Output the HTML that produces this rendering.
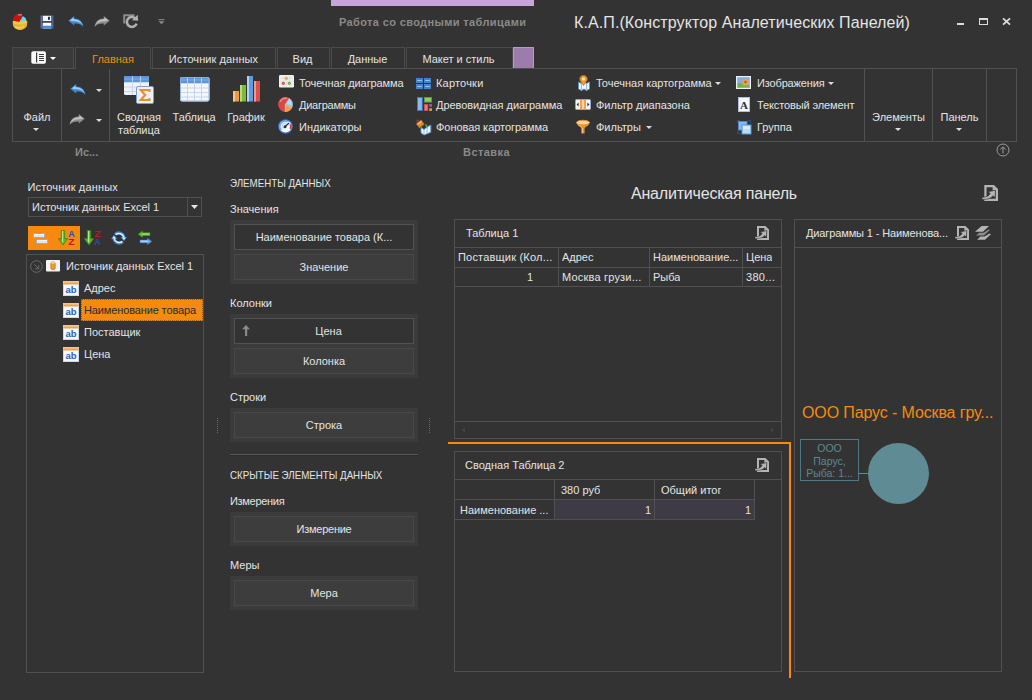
<!DOCTYPE html>
<html lang="ru">
<head>
<meta charset="utf-8">
<title>К.А.П.(Конструктор Аналетических Панелей)</title>
<style>
*{box-sizing:border-box;margin:0;padding:0}
html,body{width:1032px;height:700px;overflow:hidden;background:#333333}
body{position:relative;font-family:"Liberation Sans","DejaVu Sans",sans-serif;font-size:11px;color:#e4e4e4;line-height:13px}
.a{position:absolute}
.t{position:absolute;white-space:nowrap;line-height:13px}
.c{text-align:center}
.b{font-weight:bold;color:#8a8a8a}
.bd{border:1px solid #505050}
.tab{position:absolute;top:47px;height:22px;border:1px solid #4a4a4a;border-bottom:none;text-align:center;font-size:11px;line-height:22px;white-space:nowrap}
.vl{position:absolute;width:1px;background:#505050}
.hl{position:absolute;height:1px;background:#505050}
.grp{position:absolute;background:#3b3b3b}
.btn{position:absolute;border:1px solid #525252;background:#333333;text-align:center;line-height:24px;white-space:nowrap}
.ph{background:#3d3d3d;border-color:#484848}
.arr{position:absolute;width:0;height:0;border-left:3px solid transparent;border-right:3px solid transparent;border-top:3px solid #dcdcdc}
svg{position:absolute;overflow:visible}
.cell{position:absolute;white-space:nowrap;line-height:19px;height:20px;overflow:hidden}
</style>
</head>
<body>

<!-- ===== TITLE BAR ===== -->
<div class="a" id="ctxbar" style="left:331px;top:0;width:203px;height:6px;background:#c7a4da"></div>
<div class="t b" id="ctxtitle" style="left:339px;top:16px;font-size:11px;letter-spacing:0.37px">Работа со сводными таблицами</div>
<div class="t" id="apptitle" style="left:574px;top:14px;font-size:16px;line-height:18px;letter-spacing:0.1px">К.А.П.(Конструктор Аналетических Панелей)</div>

<!-- window buttons -->
<div class="a" style="left:957px;top:23px;width:7px;height:2px;background:#dcdcdc"></div>
<div class="a" style="left:979px;top:18px;width:9px;height:7px;border:1px solid #dcdcdc;border-top-width:2px"></div>
<svg style="left:1002px;top:18px" width="9" height="7" viewBox="0 0 9 7"><path d="M1 0.3 L8 6.7 M8 0.3 L1 6.7" stroke="#dcdcdc" stroke-width="1.8" fill="none"/></svg>

<!-- ===== TABS ===== -->
<div class="tab" style="left:12px;width:62px;background:#3a3a3a"></div>
<div class="tab" id="tab1" style="left:75px;width:76px;color:#f68a10;background:#333;height:22px;z-index:3">Главная</div>
<div class="tab" style="left:152px;width:124px;padding-right:1px;letter-spacing:0.08px">Источник данных</div>
<div class="tab" style="left:277px;width:53px;padding-right:2px">Вид</div>
<div class="tab" style="left:331px;width:74px;padding-right:1px">Данные</div>
<div class="tab" style="left:406px;width:107px;padding-right:2px">Макет и стиль</div>
<div class="a" style="left:513px;top:47px;width:21px;height:21px;background:#9b7caa;border:1px solid #b79ac6;border-bottom:none"></div>

<!-- ===== RIBBON ===== -->
<div class="a bd" id="ribbon" style="left:12px;top:68px;width:1005px;height:74px;z-index:1"></div>
<div class="a" style="left:76px;top:68px;width:74px;height:1px;background:#333;z-index:4"></div>
<div class="vl" style="left:61px;top:69px;height:72px;z-index:2"></div>
<div class="vl" style="left:109px;top:69px;height:72px;z-index:2"></div>
<div class="vl" style="left:864px;top:69px;height:72px;z-index:2"></div>
<div class="vl" style="left:932px;top:69px;height:72px;z-index:2"></div>
<div class="vl" style="left:986px;top:69px;height:72px;z-index:2"></div>

<div class="t c" style="left:16px;top:111px;width:42px;font-size:11px">Файл</div>
<div class="arr" style="left:33px;top:128px"></div>
<div class="arr" style="left:96px;top:89px"></div>
<div class="arr" style="left:96px;top:119px"></div>

<div class="t c" style="left:112px;top:111px;width:54px;font-size:11px">Сводная</div>
<div class="t c" style="left:112px;top:124px;width:54px;font-size:11px">таблица</div>
<div class="t c" style="left:167px;top:111px;width:54px;font-size:11px">Таблица</div>
<div class="t c" style="left:221px;top:111px;width:50px;font-size:11px">График</div>

<div class="t" style="left:299px;top:77px;font-size:11px;letter-spacing:-0.1px">Точечная диаграмма</div>
<div class="t" style="left:299px;top:99px;font-size:11px;letter-spacing:-0.25px">Диаграммы</div>
<div class="t" style="left:299px;top:121px;font-size:11px">Индикаторы</div>

<div class="t" style="left:436px;top:77px;font-size:11px;letter-spacing:0.2px">Карточки</div>
<div class="t" style="left:436px;top:99px;font-size:11px;letter-spacing:-0.05px">Древовидная диаграмма</div>
<div class="t" style="left:436px;top:121px;font-size:11px;letter-spacing:-0.05px">Фоновая картограмма</div>

<div class="t" style="left:596px;top:77px;font-size:11px">Точечная картограмма</div>
<div class="arr" style="left:715px;top:82px"></div>
<div class="t" style="left:596px;top:99px;font-size:11px">Фильтр диапазона</div>
<div class="t" style="left:596px;top:121px;font-size:11px">Фильтры</div>
<div class="arr" style="left:646px;top:126px"></div>

<div class="t" style="left:757px;top:77px;font-size:11px;letter-spacing:-0.15px">Изображения</div>
<div class="arr" style="left:828px;top:82px"></div>
<div class="t" style="left:757px;top:99px;font-size:11px;letter-spacing:-0.12px">Текстовый элемент</div>
<div class="t" style="left:757px;top:121px;font-size:11px">Группа</div>

<div class="t c" style="left:866px;top:111px;width:65px;font-size:11px">Элементы</div>
<div class="arr" style="left:895px;top:128px"></div>
<div class="t c" style="left:933px;top:111px;width:53px;font-size:11px">Панель</div>
<div class="arr" style="left:956px;top:128px"></div>

<div class="t b" style="left:75px;top:146px">Ис...</div>
<div class="t b" style="left:463px;top:146px;letter-spacing:0.45px">Вставка</div>

<!-- ===== LEFT PANEL ===== -->
<div class="t" style="left:27.5px;top:181px;letter-spacing:0.15px">Источник данных</div>
<div class="a bd" style="left:28px;top:197px;width:174px;height:20px"></div>
<div class="vl" style="left:187px;top:198px;height:18px"></div>
<div class="t" style="left:32px;top:201px">Источник данных Excel 1</div>
<svg style="left:191px;top:205px" width="7" height="4" viewBox="0 0 7 4"><path d="M0 0H7L3.5 4Z" fill="#e6e6e6"/></svg>

<div class="a" style="left:28px;top:226px;width:52px;height:24px;background:#f68a10"></div>

<div class="a bd" style="left:26px;top:254px;width:178px;height:419px"></div>
<div class="t" style="left:66px;top:260px">Источник данных Excel 1</div>
<div class="t" style="left:84px;top:282px">Адрес</div>
<div class="a" style="left:81px;top:299px;width:122px;height:22px;background:#f68a10"></div>
<div class="a" style="left:81px;top:299px;width:122px;height:22px;border:1px dotted #9a5a10"></div><div class="t" style="left:84px;top:304px;color:#2b2b2b;letter-spacing:-0.13px">Наименование товара</div>
<div class="t" style="left:84px;top:326px">Поставщик</div>
<div class="t" style="left:84px;top:348px">Цена</div>

<!-- ===== MIDDLE PANEL ===== -->
<div class="t" style="left:230px;top:177px;transform:scaleX(0.885);transform-origin:0 0">ЭЛЕМЕНТЫ ДАННЫХ</div>
<div class="t" style="left:230px;top:203px">Значения</div>
<div class="grp" style="left:230px;top:220px;width:188px;height:64px"></div>
<div class="btn" style="left:234px;top:224px;width:180px;height:26px">Наименование товара (К...</div>
<div class="btn ph" style="left:234px;top:254px;width:180px;height:26px">Значение</div>

<div class="t" style="left:230px;top:297px">Колонки</div>
<div class="grp" style="left:230px;top:314px;width:188px;height:64px"></div>
<div class="btn" style="left:234px;top:318px;width:180px;height:26px">&nbsp;&nbsp;&nbsp;Цена</div>
<div class="btn ph" style="left:234px;top:348px;width:180px;height:26px">Колонка</div>

<div class="t" style="left:230px;top:391px">Строки</div>
<div class="grp" style="left:230px;top:408px;width:188px;height:34px"></div>
<div class="btn ph" style="left:234px;top:412px;width:180px;height:26px">Строка</div>

<div class="hl" style="left:230px;top:454px;width:188px;background:#5a5a5a"></div><div class="hl" style="left:230px;top:455px;width:188px;background:#2b2b2b"></div>
<div class="t" style="left:230px;top:469px;transform:scaleX(0.885);transform-origin:0 0">СКРЫТЫЕ ЭЛЕМЕНТЫ ДАННЫХ</div>
<div class="t" style="left:230px;top:495px;letter-spacing:-0.3px">Измерения</div>
<div class="grp" style="left:230px;top:512px;width:188px;height:34px"></div>
<div class="btn ph" style="left:234px;top:516px;width:180px;height:26px;letter-spacing:-0.25px">Измерение</div>

<div class="t" style="left:230px;top:559px">Меры</div>
<div class="grp" style="left:230px;top:576px;width:188px;height:34px"></div>
<div class="btn ph" style="left:234px;top:580px;width:180px;height:26px">Мера</div>

<!-- ===== DASHBOARD ===== -->
<div class="t" style="left:631px;top:185px;font-size:16px;line-height:18px;letter-spacing:-0.2px">Аналитическая панель</div>

<!-- Table 1 -->
<div class="a bd" style="left:454px;top:219px;width:328px;height:220px"></div>
<div class="t" style="left:466px;top:227px">Таблица 1</div>
<div class="hl" style="left:455px;top:247px;width:326px"></div>
<div class="hl" style="left:455px;top:267px;width:326px"></div>
<div class="hl" style="left:455px;top:286px;width:326px"></div>
<div class="hl" style="left:455px;top:421px;width:326px"></div>
<div class="vl" style="left:558px;top:248px;height:38px"></div>
<div class="vl" style="left:649px;top:248px;height:38px"></div>
<div class="vl" style="left:742px;top:248px;height:38px"></div>
<div class="cell" style="left:458px;top:248px;letter-spacing:0.2px">Поставщик (Кол...</div>
<div class="cell" style="left:562px;top:248px">Адрес</div>
<div class="cell" style="left:653px;top:248px">Наименование...</div>
<div class="cell" style="left:746px;top:248px">Цена</div>
<div class="cell" style="left:527px;top:268px">1</div>
<div class="cell" style="left:562px;top:268px;letter-spacing:0.2px">Москва грузи...</div>
<div class="cell" style="left:653px;top:268px">Рыба</div>
<div class="cell" style="left:746px;top:268px;letter-spacing:0.3px">380...</div>

<!-- orange selection -->
<div class="a" style="left:448px;top:442px;width:343px;height:2px;background:#f68a10"></div>
<div class="a" style="left:789px;top:442px;width:2px;height:236px;background:#f68a10"></div>

<!-- Pivot 2 -->
<div class="a bd" style="left:454px;top:451px;width:328px;height:221px"></div>
<div class="t" style="left:465px;top:459px">Сводная Таблица 2</div>
<div class="hl" style="left:455px;top:479px;width:326px"></div>
<div class="a" style="left:555px;top:500px;width:199px;height:19px;background:#3e3b46"></div>
<div class="hl" style="left:455px;top:499px;width:300px"></div>
<div class="hl" style="left:455px;top:519px;width:300px"></div>
<div class="vl" style="left:554px;top:480px;height:40px"></div>
<div class="vl" style="left:654px;top:480px;height:40px"></div>
<div class="vl" style="left:754px;top:480px;height:40px"></div>
<div class="cell" style="left:561px;top:481px">380 руб</div>
<div class="cell" style="left:661px;top:481px">Общий итог</div>
<div class="cell" style="left:460px;top:501px">Наименование ...</div>
<div class="cell" style="left:645px;top:501px">1</div>
<div class="cell" style="left:745px;top:501px">1</div>

<!-- Chart panel -->
<div class="a bd" style="left:794px;top:219px;width:208px;height:453px"></div>
<div class="hl" style="left:795px;top:247px;width:206px"></div>
<div class="t" style="left:806px;top:227px;letter-spacing:-0.12px">Диаграммы 1 - Наименова...</div>
<div class="t" style="left:802px;top:404px;font-size:16px;line-height:18px;letter-spacing:-0.12px;color:#f68a10">ООО Парус - Москва гру...</div>
<div class="a" style="left:800px;top:439px;width:59px;height:42px;border:1px solid #4f7a85;color:#5b8896;text-align:center;font-size:10.5px;line-height:12.5px;padding-top:2px">ООО<br>Парус,<br>Рыба: 1...</div>
<div class="a" style="left:859px;top:473px;width:10px;height:1px;background:#5f8f9b"></div>
<div class="a" style="left:868px;top:443px;width:61px;height:61px;border-radius:50%;background:#5f8b95"></div>


<!-- ===== ICONS: quick access ===== -->
<svg id="i-app" style="left:12px;top:13px" width="16" height="17" viewBox="0 0 16 17">
<path d="M0.8 8.5 C0.8 6.5 15.2 6.5 15.2 8.5 V11 C15.2 14.5 11.5 17 8 17 C4.5 17 0.8 14.5 0.8 11 Z" fill="#e6b52e"/>
<ellipse cx="8" cy="9" rx="7.2" ry="2.6" fill="#f1c84a"/>
<path d="M12 13 C10 15 6 15.5 3 14" stroke="#f3d267" stroke-width="1.5" fill="none"/>
<path d="M7.3 9 L1 7.8 C0.6 4 3 1.6 5.2 1.2 L9.8 0.8 L10 4.5 Z" fill="#c9130f"/>
<path d="M5.2 1.2 L9.8 0.8 L10 2.6 L7 3 Z" fill="#ee5d58"/>
<path d="M8 8.8 L10.6 3.2 C12.5 3.6 14.2 5.4 14.4 7.6 Z" fill="#58dff0"/>
</svg>
<svg id="i-save" style="left:40px;top:15px" width="14" height="14" viewBox="0 0 14 14">
<rect x="0.3" y="0.3" width="13.4" height="13.4" rx="1" fill="#3b4b70"/>
<rect x="0.8" y="0.8" width="1" height="12.4" fill="#6a7da6"/>
<rect x="12.2" y="0.8" width="1" height="12.4" fill="#566a94"/>
<rect x="2.8" y="0.8" width="8.4" height="5.2" fill="#f4f6fb"/>
<rect x="8" y="1.8" width="1.9" height="3" fill="#1f2940"/>
<rect x="2.8" y="7.8" width="8.4" height="6" fill="#fafcff"/>
<rect x="2.8" y="10" width="8.4" height="1" fill="#c9dcf3"/>
<rect x="2.8" y="11" width="8.4" height="2.8" fill="#4a8ad4"/>
</svg>
<svg id="i-undo" style="left:68px;top:16px" width="16" height="11" viewBox="0 0 16 11">
<path d="M0.3 4.8 L6.2 0 L6.2 2.6 C11.5 2.6 15 6 15.3 11 C13 8.2 10.5 7.4 6.2 7.6 L6.2 9.6 Z" fill="#3d86d8"/>
<path d="M1.6 4.6 L5.6 1.4 L5.6 3.2 C10.5 3.2 13.5 5.6 14.6 9.4 C12.5 6.2 9.5 5 5 5.2 Z" fill="#9fcbf5"/>
</svg>
<svg id="i-redo" style="left:94px;top:16px" width="16" height="11" viewBox="0 0 16 11"><g transform="translate(16,0) scale(-1,1)">
<path d="M0.3 4.8 L6.2 0 L6.2 2.6 C11.5 2.6 15 6 15.3 11 C13 8.2 10.5 7.4 6.2 7.6 L6.2 9.6 Z" fill="#8e8e8e"/>
<path d="M1.6 4.6 L5.6 1.4 L5.6 3.2 C10.5 3.2 13.5 5.6 14.6 9.4 C12.5 6.2 9.5 5 5 5.2 Z" fill="#c2c2c2"/>
</g></svg>
<svg id="i-refr" style="left:123px;top:14px" width="17" height="15" viewBox="0 0 17 15">
<path d="M1.2 9.5 L1.2 1.2 L11.5 1.2" stroke="#8a8a8a" stroke-width="2" fill="none"/>
<path d="M13.6 9.6 A5 5 0 1 1 12.2 4.2" stroke="#b0b0b0" stroke-width="2.6" fill="none"/>
<path d="M9 6.2 L15.2 6.8 L14.6 0.8 Z" fill="#b0b0b0"/>
</svg>
<svg id="i-qdd" style="left:158px;top:18px" width="7" height="7" viewBox="0 0 7 7">
<rect x="0.5" y="1.2" width="6" height="1" fill="#8c8c8c"/>
<path d="M0.5 3.2 L6.5 3.2 L3.5 6.2 Z" fill="#8c8c8c"/>
</svg>

<!-- app menu tab icon -->
<svg id="i-menu" style="left:31px;top:51px" width="15" height="13" viewBox="0 0 15 13">
<rect x="0.3" y="0.3" width="14.6" height="12.4" rx="1.8" fill="#ffffff"/>
<rect x="5" y="1.5" width="1.2" height="10" fill="#3a3a3a"/>
<rect x="8" y="3" width="5" height="1" fill="#3a3a3a"/>
<rect x="8" y="5" width="5" height="1" fill="#3a3a3a"/>
<rect x="8" y="7" width="5" height="1" fill="#3a3a3a"/>
<rect x="8" y="9" width="5" height="1" fill="#3a3a3a"/>
</svg>
<div class="arr" style="left:50px;top:57px;border-top-color:#fff"></div>

<!-- ribbon undo/redo -->
<svg id="r-undo" style="left:70px;top:84px" width="16" height="11" viewBox="0 0 16 11">
<path d="M0.3 4.8 L6.2 0 L6.2 2.6 C11.5 2.6 15 6 15.3 11 C13 8.2 10.5 7.4 6.2 7.6 L6.2 9.6 Z" fill="#3d86d8"/>
<path d="M1.6 4.6 L5.6 1.4 L5.6 3.2 C10.5 3.2 13.5 5.6 14.6 9.4 C12.5 6.2 9.5 5 5 5.2 Z" fill="#9fcbf5"/>
</svg>
<svg id="r-redo" style="left:69px;top:114px" width="16" height="11" viewBox="0 0 16 11"><g transform="translate(16,0) scale(-1,1)">
<path d="M0.3 4.8 L6.2 0 L6.2 2.6 C11.5 2.6 15 6 15.3 11 C13 8.2 10.5 7.4 6.2 7.6 L6.2 9.6 Z" fill="#8e8e8e"/>
<path d="M1.6 4.6 L5.6 1.4 L5.6 3.2 C10.5 3.2 13.5 5.6 14.6 9.4 C12.5 6.2 9.5 5 5 5.2 Z" fill="#c2c2c2"/>
</g></svg>

<!-- large: pivot -->
<svg id="r-pivot" style="left:124px;top:76px" width="30" height="28" viewBox="0 0 30 28">
<rect x="0" y="0" width="25" height="19" rx="1.5" fill="#eef2fa"/>
<path d="M0 1.5 Q0 0 1.5 0 H23.5 Q25 0 25 1.5 V6 H0 Z" fill="#5b97d8"/>
<path d="M0 3 H25" stroke="#7fb0e6" stroke-width="1"/>
<path d="M0 6.5H25M0 11H25M0 15.5H25" stroke="#c3d2ea" stroke-width="0.9"/>
<path d="M8.5 0V19M16.5 0V19" stroke="#c3d2ea" stroke-width="0.9"/>
<rect x="12.5" y="10.5" width="17" height="17" rx="1.5" fill="#eef1f9" stroke="#7f9fd2"/>
<path d="M25.5 16 V14 H16.8 L21.2 19 L16.8 24 H25.5 V22" stroke="#e8912a" stroke-width="2.2" fill="none" stroke-linejoin="miter"/>
</svg>
<!-- large: table -->
<svg id="r-table" style="left:180px;top:77px" width="30" height="25" viewBox="0 0 30 25">
<rect x="0" y="0" width="29.5" height="24.5" rx="2" fill="#f3f6fc"/>
<path d="M0 2 Q0 0 2 0 H27.5 Q29.5 0 29.5 2 V6 H0 Z" fill="#5b97d8"/>
<path d="M0 3 H29.5" stroke="#7fb0e6" stroke-width="1"/>
<path d="M0 6.5H29.5M0 11H29.5M0 15.5H29.5M0 20H29.5" stroke="#c3d2ea" stroke-width="0.9"/>
<path d="M7.5 0V24.5M14.5 0V24.5M21.5 0V24.5" stroke="#c3d2ea" stroke-width="0.9"/>
<rect x="0.5" y="0.5" width="28.5" height="23.5" rx="2" fill="none" stroke="#8fb0de" stroke-width="0.9"/>
</svg>
<!-- large: chart -->
<svg id="r-chart" style="left:232px;top:76px" width="29" height="26" viewBox="0 0 29 26">
<rect x="1" y="15" width="6" height="10.5" fill="#ee9a3d"/>
<rect x="1" y="15" width="2" height="10.5" fill="#f7c58a"/>
<rect x="8" y="9" width="6" height="16.5" fill="#7db93a"/>
<rect x="8" y="9" width="2" height="16.5" fill="#b5dc82"/>
<rect x="15" y="0" width="6" height="25.5" fill="#5d9ee0"/>
<rect x="15" y="0" width="2" height="25.5" fill="#b4d4f4"/>
<rect x="22" y="5" width="6" height="20.5" fill="#dc4f4a"/>
<rect x="22" y="5" width="2" height="20.5" fill="#f09a94"/>
</svg>

<!-- small col 1 -->
<svg id="r-scat" style="left:279px;top:75px" width="15" height="12.5" viewBox="0 0 15 12.5">
<rect x="0" y="0" width="15" height="12.5" rx="1.2" fill="#f3f1ee"/>
<path d="M1 3.2H14M1 6.2H14M1 9.2H14M4.2 1V11.5M7.4 1V11.5M10.6 1V11.5" stroke="#dedad4" stroke-width="0.7"/>
<circle cx="7.3" cy="3.2" r="1.5" fill="#e8922a"/><circle cx="7.3" cy="3.2" r="0.6" fill="#f8d9a8"/>
<circle cx="4.3" cy="8.3" r="1.5" fill="#cf3b36"/><circle cx="4.3" cy="8.3" r="0.6" fill="#efa09c"/>
<circle cx="10.3" cy="8.3" r="1.5" fill="#62a332"/><circle cx="10.3" cy="8.3" r="0.6" fill="#b9dc94"/>
</svg>
<svg id="r-pie" style="left:278px;top:97px" width="15" height="15" viewBox="0 0 15 15">
<circle cx="7.5" cy="7.5" r="7.4" fill="#d64a43"/>
<path d="M2 5 A6.3 6.3 0 0 1 9 1.4" stroke="#ee8b85" stroke-width="1.6" fill="none"/>
<path d="M7.3 7.6 L11.3 1.2 A7.4 7.4 0 0 1 14.2 10.6 Z" fill="#8dc1ec"/>
<path d="M8.6 6.8 L11.6 2.6 A6 6 0 0 1 13.4 8.6 Z" fill="#b9daf6"/>
<path d="M7.3 7.6 L14.2 10.6 A7.4 7.4 0 0 1 7.2 14.9 Z" fill="#eea04a"/>
<path d="M7.3 7.6 L11.3 1.2 M7.3 7.6 L14.2 10.6 M7.3 7.6 L7.2 14.9" stroke="#f3e6da" stroke-width="0.5"/>
</svg>
<svg id="r-gauge" style="left:278px;top:119px" width="15" height="15" viewBox="0 0 15 15">
<circle cx="7.5" cy="7.5" r="7.3" fill="#3f78cf"/>
<circle cx="7.5" cy="7.5" r="6" fill="#f4f8fe"/>
<path d="M3.2 11 A5.4 5.4 0 0 1 9.6 2.6" stroke="#6fa6e8" stroke-width="1.6" fill="none"/>
<path d="M4.9 9.8 A3.4 3.4 0 0 1 8.4 4.3" stroke="#a9cbf2" stroke-width="1" fill="none"/>
<path d="M12.3 5.4 A5.2 5.2 0 0 1 12.3 10" stroke="#e03c30" stroke-width="1.8" fill="none"/>
<path d="M7 7.8 L11 4" stroke="#1f2a55" stroke-width="1.2"/>
<circle cx="7" cy="7.8" r="1.5" fill="#1f2a55"/>
</svg>

<!-- small col 2 -->
<svg id="r-cards" style="left:416px;top:78px" width="15" height="11" viewBox="0 0 15 11">
<rect x="0" y="0" width="7" height="5" fill="#4580c8"/><rect x="8" y="0" width="7" height="5" fill="#4580c8"/>
<rect x="0" y="6" width="7" height="5" fill="#4580c8"/><rect x="8" y="6" width="7" height="5" fill="#4580c8"/>
<path d="M1.2 2.5H5.8M9.2 2.5H13.8M1.2 8.5H5.8M9.2 8.5H13.8" stroke="#9cc2ee" stroke-width="1.2"/>
</svg>
<svg id="r-tree" style="left:417px;top:97px" width="15" height="14" viewBox="0 0 15 14">
<rect x="0" y="0" width="5.8" height="14" fill="#3f78c8"/>
<rect x="1" y="1" width="3.8" height="12" fill="#8ab9ee"/>
<rect x="7" y="0" width="8" height="5.6" fill="#5f9a35"/>
<rect x="8" y="1" width="6" height="3.6" fill="#94c860"/>
<rect x="7" y="7" width="4.2" height="7" fill="#cf4540"/>
<rect x="7.8" y="7.8" width="2.6" height="5.4" fill="#e57f78"/>
<rect x="12.2" y="7" width="2.8" height="2.8" fill="#8a55c8"/>
<rect x="12.2" y="11.2" width="2.8" height="2.8" fill="#e8922a"/>
</svg>
<svg id="r-chor" style="left:416px;top:119px" width="16" height="16" viewBox="0 0 16 16">
<path d="M5 8.5 L8 10.5 L11 8 L14.8 6.2 V13.2 L11 14.8 L8 16 L5 13.8 Z" fill="#f3f8fe" stroke="#5b97d8" stroke-width="1"/>
<path d="M8 10.5 V16 M11 8 V14.8" stroke="#7fb0e6" stroke-width="0.9"/>
<path d="M9 5.2 C11 5 12 6.5 11.6 9.4 C10.4 8.6 9.4 7.2 9 5.2Z" fill="#56a83a"/>
<g transform="rotate(-38 4.2 5)">
<rect x="1" y="2.2" width="6.6" height="5.8" rx="0.8" fill="#c8781f"/>
<rect x="1.8" y="3" width="5" height="1.4" fill="#f5c37a"/>
<rect x="1.8" y="5.2" width="5" height="1" fill="#e8a04a"/>
</g>
<path d="M3.2 1.6 C1.6 0.2 0.2 1.6 1.4 3.2" stroke="#d23a2a" stroke-width="0.9" fill="none"/>
</svg>

<!-- small col 3 -->
<svg id="r-geo" style="left:578px;top:75px" width="12" height="16" viewBox="0 0 12 16">
<path d="M0.5 7 L3.5 8.5 L6 7 L8.5 8.5 L11.5 7 V14 L8.5 15.5 L6 14 L3.5 15.5 L0.5 14 Z" fill="#f3f8fe" stroke="#5b97d8" stroke-width="1"/>
<path d="M3.5 8.5V15.5M8.5 8.5V15.5" stroke="#8fbcee"/>
<path d="M5.5 0.5 C3.2 0.5 1.8 2.2 1.8 4 C1.8 6.2 4.2 7.8 5.5 10.5 C6.8 7.8 9.2 6.2 9.2 4 C9.2 2.2 7.8 0.5 5.5 0.5 Z" fill="#f19a2d" stroke="#c87415" stroke-width="0.8"/>
<circle cx="5.5" cy="4" r="1.5" fill="#fff3df"/>
</svg>
<svg id="r-range" style="left:575px;top:99px" width="16" height="11" viewBox="0 0 16 11">
<rect x="0.5" y="0.5" width="15" height="10" rx="1" fill="#f2f5fb" stroke="#8aa7d6"/>
<rect x="5" y="1" width="6" height="9" fill="#f0a04a"/>
<rect x="7" y="1" width="2" height="9" fill="#f8d3a6"/>
<path d="M3.6 3.5 L1.6 5.5 L3.6 7.5 Z" fill="#2f2f3a"/>
<path d="M12.4 3.5 L14.4 5.5 L12.4 7.5 Z" fill="#2f2f3a"/>
</svg>
<svg id="r-funnel" style="left:576px;top:120px" width="14" height="14" viewBox="0 0 14 14">
<path d="M0.5 2.5 C0.5 6 4.6 6.2 5.4 8.4 V13.5 H8.6 V8.4 C9.4 6.2 13.5 6 13.5 2.5 Z" fill="#e8922a"/>
<ellipse cx="7" cy="2.6" rx="6.5" ry="2.3" fill="#f9d79c" stroke="#e8922a" stroke-width="1"/>
<path d="M6.4 8 V13" stroke="#f8c884" stroke-width="1"/>
<path d="M2.5 5.2 C4 6 5.5 6.6 6 7.6" stroke="#f8c884" stroke-width="0.9" fill="none"/>
</svg>

<!-- small col 4 -->
<svg id="r-img" style="left:736px;top:76px" width="15" height="13" viewBox="0 0 15 13">
<rect x="0.5" y="0.5" width="14" height="12" fill="#7fb0e6"/>
<path d="M1 8 C3 6.5 5 6.5 7 8.5 L7 12 H1 Z" fill="#72b340"/>
<rect x="1" y="9.5" width="13" height="2.5" fill="#72b340"/>
<circle cx="9.5" cy="6" r="3.2" fill="#f0a43a"/>
<circle cx="9.5" cy="6" r="1.3" fill="#c9541a"/>
<rect x="0.6" y="0.6" width="13.8" height="11.8" fill="none" stroke="#eef2fa" stroke-width="1.2"/>
</svg>
<svg id="r-text" style="left:738px;top:97px" width="12" height="15" viewBox="0 0 12 15">
<rect x="0.5" y="0.5" width="11" height="14" fill="#f6f8fd" stroke="#a9bfe4"/>
<text x="6" y="11.5" text-anchor="middle" font-family="Liberation Serif,serif" font-weight="bold" font-size="11" fill="#2a2f4a">A</text>
</svg>
<svg id="r-group" style="left:737px;top:120px" width="15" height="14" viewBox="0 0 15 14">
<path d="M0.5 3V0.5H3M11 0.5H13.5V3M0.5 11V13.5H3" stroke="#2d4f8f" stroke-width="1" fill="none"/>
<rect x="1.5" y="1.5" width="8.5" height="8.5" fill="#86b8ea" stroke="#4f88cc"/>
<rect x="5" y="5" width="9" height="9" fill="#b9dbf7" stroke="#5b97d8"/>
<rect x="6" y="6" width="7" height="3" fill="#d6eafb"/>
</svg>

<!-- collapse ribbon -->
<svg id="r-coll" style="left:996px;top:143px" width="14" height="14" viewBox="0 0 14 14">
<circle cx="7" cy="7" r="6" fill="none" stroke="#9c9c9c" stroke-width="1"/>
<path d="M7 10.5 V4 M4.3 6.5 L7 3.8 L9.7 6.5" stroke="#9c9c9c" stroke-width="1" fill="none"/>
</svg>

<!-- ===== left toolbar icons ===== -->
<svg id="l-grp" style="left:33px;top:233px" width="15" height="11" viewBox="0 0 15 11">
<rect x="0.5" y="0.5" width="11" height="4" rx="0.8" fill="#f2f8fe" stroke="#7fb0e6"/>
<rect x="1.5" y="2.5" width="9" height="1" fill="#b9d7f5"/>
<rect x="3.5" y="6.5" width="11" height="4" rx="0.8" fill="#f2f8fe" stroke="#7fb0e6"/>
<rect x="4.5" y="8.5" width="9" height="1" fill="#b9d7f5"/>
</svg>
<svg id="l-az" style="left:58px;top:230px" width="17" height="16" viewBox="0 0 17 16">
<path d="M3.3 0.5 H6.7 V8.6 H9.6 L5 15 L0.4 8.6 H3.3 Z" fill="#5cb531" stroke="#3a8a1c" stroke-width="0.8"/>
<path d="M4.6 1 V12.5" stroke="#b9ea8c" stroke-width="1.1"/>
<text x="13.4" y="7.2" text-anchor="middle" font-family="Liberation Sans,sans-serif" font-weight="bold" font-size="9.6" textLength="6.4" lengthAdjust="spacingAndGlyphs" fill="#2b4daa">A</text>
<text x="13.4" y="15.2" text-anchor="middle" font-family="Liberation Sans,sans-serif" font-weight="bold" font-size="9.6" textLength="6.4" lengthAdjust="spacingAndGlyphs" fill="#b5201c">Z</text>
</svg>
<svg id="l-za" style="left:84px;top:230px" width="17" height="16" viewBox="0 0 17 16">
<path d="M3.3 0.5 H6.7 V8.6 H9.6 L5 15 L0.4 8.6 H3.3 Z" fill="#5cb531" stroke="#3a8a1c" stroke-width="0.8"/>
<path d="M4.6 1 V12.5" stroke="#b9ea8c" stroke-width="1.1"/>
<text x="13.4" y="7.2" text-anchor="middle" font-family="Liberation Sans,sans-serif" font-weight="bold" font-size="9.6" textLength="6.4" lengthAdjust="spacingAndGlyphs" fill="#b5201c">Z</text>
<text x="13.4" y="15.2" text-anchor="middle" font-family="Liberation Sans,sans-serif" font-weight="bold" font-size="9.6" textLength="6.4" lengthAdjust="spacingAndGlyphs" fill="#2b4daa">A</text>
</svg>
<svg id="l-ref" style="left:111px;top:231px" width="16" height="14" viewBox="0 0 16 14">
<path d="M4.2 3.4 A5.2 5.2 0 0 1 13 6.6" stroke="#3f82d2" stroke-width="3.2" fill="none"/>
<path d="M11.8 10.6 A5.2 5.2 0 0 1 3 7.4" stroke="#3f82d2" stroke-width="3.2" fill="none"/>
<path d="M9.6 6 H16 L13 10.2 Z" fill="#3f82d2"/>
<path d="M6.4 8 H0 L3 3.8 Z" fill="#3f82d2"/>
<path d="M4.6 3.6 A5.2 5.2 0 0 1 12.9 6.4" stroke="#e3f1fd" stroke-width="1.4" fill="none"/>
<path d="M11.4 10.4 A5.2 5.2 0 0 1 3.1 7.6" stroke="#e3f1fd" stroke-width="1.4" fill="none"/>
<path d="M11 6.6 H14.8 L13 9 Z" fill="#e3f1fd"/>
<path d="M5 7.4 H1.2 L3 5 Z" fill="#e3f1fd"/>
</svg>
<svg id="l-swap" style="left:138px;top:231px" width="14" height="14" viewBox="0 0 14 14">
<path d="M0.2 3.2 L4.6 0 V1.7 H12 V4.7 H4.6 V6.4 Z" fill="#67bd38" stroke="#3f8f1f" stroke-width="0.5"/>
<path d="M4 3 H11.5" stroke="#b9ea8c" stroke-width="0.9"/>
<path d="M13.8 10.4 L9.4 7.2 V8.9 H2 V11.9 H9.4 V13.6 Z" fill="#6aa9ea" stroke="#3f78c0" stroke-width="0.5"/>
<path d="M2.5 10.2 H10" stroke="#cfe6fb" stroke-width="0.9"/>
</svg>

<!-- tree icons -->
<svg id="t-exp" style="left:30px;top:260px" width="13" height="13" viewBox="0 0 13 13">
<circle cx="6.5" cy="6.5" r="5.8" fill="none" stroke="#6a6a6a" stroke-width="1"/>
<path d="M4.2 4.2 L8.6 8.6 M8.8 5 V8.8 H5" stroke="#6a6a6a" stroke-width="1" fill="none"/>
</svg>
<svg id="t-db" style="left:46px;top:260px" width="14" height="12" viewBox="0 0 16 12" preserveAspectRatio="none">
<rect x="0" y="0" width="16" height="11.5" rx="1" fill="#f2f4f8"/>
<rect x="5.5" y="2" width="5" height="7.5" rx="1.5" fill="#ef9a35" stroke="#c8741a" stroke-width="0.8"/>
<ellipse cx="8" cy="2.8" rx="2.5" ry="1" fill="#f8cf8c"/>
</svg>
<svg style="left:63px;top:281px" width="16" height="15" viewBox="0 0 16 15">
<rect x="0.5" y="0.5" width="15" height="14" fill="#f7f9fd" stroke="#cfd8ea"/>
<rect x="0.5" y="0.5" width="15" height="3" fill="#f0a04a"/><rect x="0.5" y="0.5" width="15" height="1" fill="#f8cf9c"/>
<text x="8" y="12.3" text-anchor="middle" font-family="Liberation Sans,sans-serif" font-size="9.5" font-weight="bold" fill="#2a5fc0">ab</text>
</svg>
<svg style="left:63px;top:303px" width="16" height="15" viewBox="0 0 16 15">
<rect x="0.5" y="0.5" width="15" height="14" fill="#f7f9fd" stroke="#cfd8ea"/>
<rect x="0.5" y="0.5" width="15" height="3" fill="#f0a04a"/><rect x="0.5" y="0.5" width="15" height="1" fill="#f8cf9c"/>
<text x="8" y="12.3" text-anchor="middle" font-family="Liberation Sans,sans-serif" font-size="9.5" font-weight="bold" fill="#2a5fc0">ab</text>
</svg>
<svg style="left:63px;top:325px" width="16" height="15" viewBox="0 0 16 15">
<rect x="0.5" y="0.5" width="15" height="14" fill="#f7f9fd" stroke="#cfd8ea"/>
<rect x="0.5" y="0.5" width="15" height="3" fill="#f0a04a"/><rect x="0.5" y="0.5" width="15" height="1" fill="#f8cf9c"/>
<text x="8" y="12.3" text-anchor="middle" font-family="Liberation Sans,sans-serif" font-size="9.5" font-weight="bold" fill="#2a5fc0">ab</text>
</svg>
<svg style="left:63px;top:347px" width="16" height="15" viewBox="0 0 16 15">
<rect x="0.5" y="0.5" width="15" height="14" fill="#f7f9fd" stroke="#cfd8ea"/>
<rect x="0.5" y="0.5" width="15" height="3" fill="#f0a04a"/><rect x="0.5" y="0.5" width="15" height="1" fill="#f8cf9c"/>
<text x="8" y="12.3" text-anchor="middle" font-family="Liberation Sans,sans-serif" font-size="9.5" font-weight="bold" fill="#2a5fc0">ab</text>
</svg>
<svg style="left:982px;top:185px" width="16" height="16" viewBox="0 0 14 14">
<path d="M3 1 H10 L13 4 V13 H3 Z" stroke="#b4b4b4" stroke-width="2" fill="none" stroke-linejoin="miter"/>
<path d="M9.3 1.2 V4.7 H12.8 Z" fill="#b4b4b4"/>
<path d="M0 10.8 C3.5 10.8 6 9.6 7.2 7.4 L5.4 6 L11.8 4.6 L11.4 11 L9.6 9.4 C7.8 11.8 4.8 12.9 0 12.7 Z" fill="#b4b4b4" stroke="#333" stroke-width="0.5"/>
</svg>
<svg style="left:755px;top:226px" width="14" height="14" viewBox="0 0 14 14">
<path d="M3 1 H10 L13 4 V13 H3 Z" stroke="#b4b4b4" stroke-width="2" fill="none" stroke-linejoin="miter"/>
<path d="M9.3 1.2 V4.7 H12.8 Z" fill="#b4b4b4"/>
<path d="M0 10.8 C3.5 10.8 6 9.6 7.2 7.4 L5.4 6 L11.8 4.6 L11.4 11 L9.6 9.4 C7.8 11.8 4.8 12.9 0 12.7 Z" fill="#b4b4b4" stroke="#333" stroke-width="0.5"/>
</svg>
<svg style="left:755px;top:458px" width="14" height="14" viewBox="0 0 14 14">
<path d="M3 1 H10 L13 4 V13 H3 Z" stroke="#b4b4b4" stroke-width="2" fill="none" stroke-linejoin="miter"/>
<path d="M9.3 1.2 V4.7 H12.8 Z" fill="#b4b4b4"/>
<path d="M0 10.8 C3.5 10.8 6 9.6 7.2 7.4 L5.4 6 L11.8 4.6 L11.4 11 L9.6 9.4 C7.8 11.8 4.8 12.9 0 12.7 Z" fill="#b4b4b4" stroke="#333" stroke-width="0.5"/>
</svg>
<svg style="left:955px;top:226px" width="14" height="14" viewBox="0 0 14 14">
<path d="M3 1 H10 L13 4 V13 H3 Z" stroke="#b4b4b4" stroke-width="2" fill="none" stroke-linejoin="miter"/>
<path d="M9.3 1.2 V4.7 H12.8 Z" fill="#b4b4b4"/>
<path d="M0 10.8 C3.5 10.8 6 9.6 7.2 7.4 L5.4 6 L11.8 4.6 L11.4 11 L9.6 9.4 C7.8 11.8 4.8 12.9 0 12.7 Z" fill="#b4b4b4" stroke="#333" stroke-width="0.5"/>
</svg>
<svg id="c-layer" style="left:975px;top:226px" width="16" height="14" viewBox="0 0 16 14">
<path d="M0 5.8 L6.6 0 H14 L8 5.8 Z" fill="#b4b4b4"/>
<path d="M1 9.5 L4.3 6.7 H8.6 L13.6 3.4 L14.9 4.1 L9 9.5 Z" fill="#8c8c8c"/>
<path d="M2.2 13.7 L5.4 10.5 H9.6 L14.6 7.4 L15.9 8.2 L10 13.7 Z" fill="#b4b4b4"/>
</svg>
<!-- sort arrow in Цена -->
<svg style="left:242px;top:325px" width="8" height="11" viewBox="0 0 8 11"><path d="M0 4.3 L4 0 L8 4.3 Z" fill="#8a8a8a"/><rect x="3" y="4" width="2.2" height="7" fill="#8a8a8a"/></svg>
<!-- scroll arrows table1 -->
<svg style="left:462px;top:427px" width="3" height="6" viewBox="0 0 4 7"><path d="M4 0 L0 3.5 L4 7Z" fill="#454545"/></svg>
<svg style="left:771px;top:427px" width="3" height="6" viewBox="0 0 4 7"><path d="M0 0 L4 3.5 L0 7Z" fill="#454545"/></svg>
<!-- splitter dots -->
<div class="a" style="left:217px;top:418px;width:1px;height:15px;background:repeating-linear-gradient(#6a6a6a 0 1px,transparent 1px 2px)"></div>
<div class="a" style="left:429px;top:418px;width:1px;height:15px;background:repeating-linear-gradient(#6a6a6a 0 1px,transparent 1px 2px)"></div>
</body>
</html>
